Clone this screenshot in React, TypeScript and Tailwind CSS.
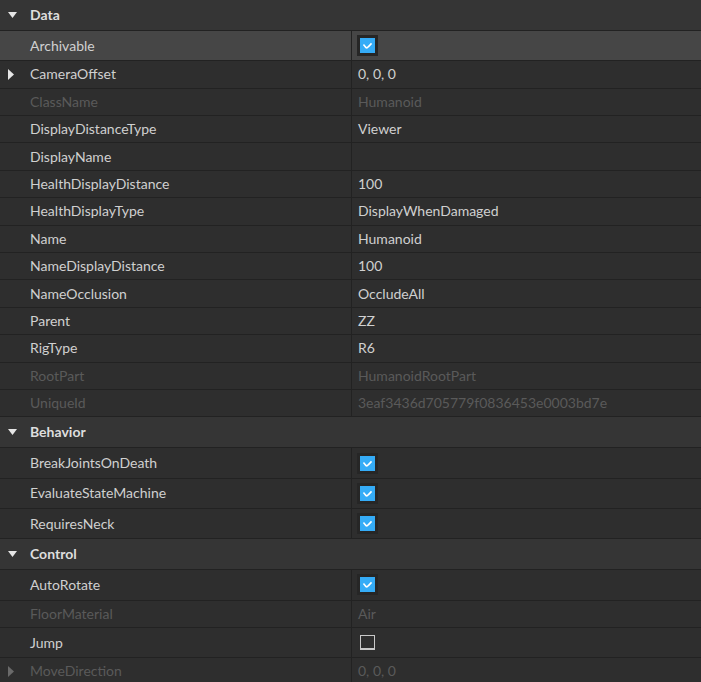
import React from 'react';

type Prop = {
  name: string;
  value?: string;
  check?: boolean;
  disabled?: boolean;
  expand?: boolean;
  selected?: boolean;
};

type Section = { title: string; props: Prop[] };

const SECTIONS: Section[] = [
  {
    title: 'Data',
    props: [
      { name: 'Archivable', check: true, selected: true },
      { name: 'CameraOffset', value: '0, 0, 0', expand: true },
      { name: 'ClassName', value: 'Humanoid', disabled: true },
      { name: 'DisplayDistanceType', value: 'Viewer' },
      { name: 'DisplayName', value: '' },
      { name: 'HealthDisplayDistance', value: '100' },
      { name: 'HealthDisplayType', value: 'DisplayWhenDamaged' },
      { name: 'Name', value: 'Humanoid' },
      { name: 'NameDisplayDistance', value: '100' },
      { name: 'NameOcclusion', value: 'OccludeAll' },
      { name: 'Parent', value: 'ZZ' },
      { name: 'RigType', value: 'R6' },
      { name: 'RootPart', value: 'HumanoidRootPart', disabled: true },
      { name: 'UniqueId', value: '3eaf3436d705779f0836453e0003bd7e', disabled: true },
    ],
  },
  {
    title: 'Behavior',
    props: [
      { name: 'BreakJointsOnDeath', check: true },
      { name: 'EvaluateStateMachine', check: true },
      { name: 'RequiresNeck', check: true },
    ],
  },
  {
    title: 'Control',
    props: [
      { name: 'AutoRotate', check: true },
      { name: 'FloorMaterial', value: 'Air', disabled: true },
      { name: 'Jump', check: false },
      { name: 'MoveDirection', value: '0, 0, 0', disabled: true, expand: true },
    ],
  },
];

function Checkbox({ checked }: { checked: boolean }) {
  if (!checked) {
    return (
      <span className="block h-[15px] w-[15px] border border-b-2 border-[#c8c8c8] bg-transparent" />
    );
  }
  return (
    <span className="flex h-[15px] w-[15px] items-center justify-center bg-[#35acf7] outline-[3px] outline-solid outline-[#262626]">
      <svg width="15" height="15" viewBox="0 0 15 15">
        <path d="M4 7.2 L6 9.6 Q7 10.4 8.5 8.6 L11 6" fill="none" stroke="#fff" strokeWidth="1.6" strokeLinecap="square" />
      </svg>
    </span>
  );
}

function Row({ p }: { p: Prop }) {
  const h = p.check !== undefined ? 'h-[30.3px]' : 'h-[27.4px]';
  const tone = p.disabled ? 'text-[#5a5a5a]' : 'text-[#d0d0d0]';
  return (
    <div
      className={`flex ${h} border-b border-[#222222] ${p.selected ? 'bg-[#464646]' : 'bg-[#2e2e2e]'}`}
    >
      <div className="relative flex w-[352px] shrink-0 items-center border-r border-[#222222] pl-[30px]">
        {p.expand && (
          <svg className="absolute left-[8px]" width="7" height="11" viewBox="0 0 7 11">
            <path d="M0 0 L6 5.5 L0 11 Z" fill={p.disabled ? '#6a6a6a' : '#e6e6e6'} />
          </svg>
        )}
        <span className={`whitespace-nowrap ${tone}`}>{p.name}</span>
      </div>
      <div className="flex min-w-0 flex-1 items-center pl-[6px]">
        {p.check !== undefined ? (
          <span className="pl-[2px]">
            <Checkbox checked={p.check} />
          </span>
        ) : (
          <span className={`whitespace-nowrap ${tone}`}>{p.value}</span>
        )}
      </div>
    </div>
  );
}

export default function App() {
  return (
    <div
      className="h-[682px] w-[701px] overflow-hidden bg-[#2e2e2e] text-[14px] leading-[18px]"
      style={{ fontFamily: 'Lato, "Liberation Sans", sans-serif' }}
    >
      {SECTIONS.map((s) => (
        <div key={s.title}>
          <div className="relative flex h-[31px] items-center border-b border-[#222222] bg-[#353535] pl-[30px]">
            <svg className="absolute left-[8px] top-[12px]" width="9" height="6" viewBox="0 0 9 6">
              <path d="M0 0 L9 0 L4.5 6 Z" fill="#e6e6e6" />
            </svg>
            <span className="font-bold text-[#dedede]">{s.title}</span>
          </div>
          {s.props.map((p) => (
            <Row key={p.name} p={p} />
          ))}
        </div>
      ))}
    </div>
  );
}
